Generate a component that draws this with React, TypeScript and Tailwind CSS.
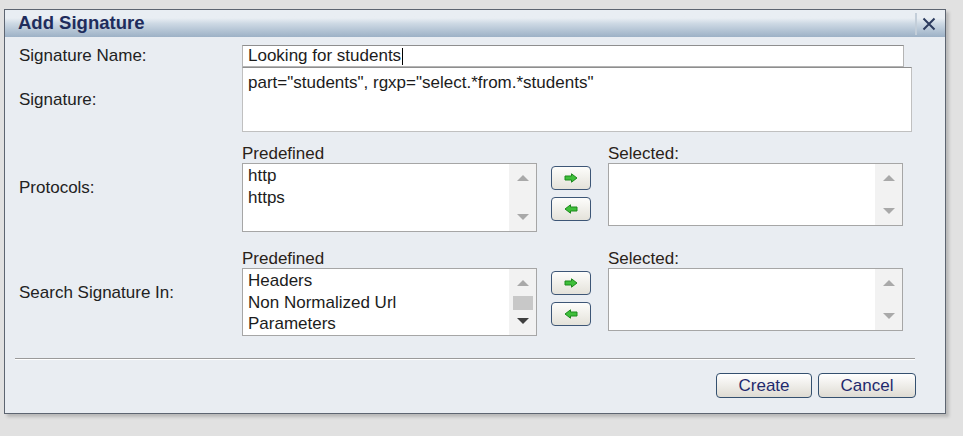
import React from 'react';

const font = { fontFamily: '"Liberation Sans", Arial, sans-serif' };

function Arrow({ dir }: { dir: 'right' | 'left' }) {
  return (
    <svg width="14" height="10" viewBox="0 0 14 10" className={dir === 'left' ? 'rotate-180' : ''}>
      <polygon
        points="1,3 7.5,3 7.5,0.8 13,5 7.5,9.2 7.5,7 1,7"
        fill="#3fbf3a"
        stroke="#1d8a1d"
        strokeWidth="1"
        strokeLinejoin="round"
      />
    </svg>
  );
}

function ListBox({ items, h, thumb }: { items: string[]; h: string; thumb?: boolean }) {
  return (
    <div className={`flex w-[295px] ${h} border border-[#a6a6a6] bg-white`}>
      <div className="flex-1 pl-[5px] pt-[1px] text-[17px] leading-[21.5px] text-[#1c1c1c]">
        {items.map((it) => (
          <div key={it}>{it}</div>
        ))}
      </div>
      <div className="relative flex w-[27px] flex-col items-center justify-between bg-[#f2f2f2] py-[11px]">
        <div className="h-0 w-0 border-x-[6px] border-b-[6px] border-x-transparent border-b-[#a9a9a9]" />
        {thumb && <div className="absolute top-[27px] h-[14px] w-[20px] bg-[#c8c8c8]" />}
        <div
          className={`h-0 w-0 border-x-[6px] border-t-[6px] border-x-transparent ${
            thumb ? 'border-t-[#3f3f3f]' : 'border-t-[#a9a9a9]'
          }`}
        />
      </div>
    </div>
  );
}

function MoveButtons() {
  const btn =
    'flex h-[24px] w-[40px] items-center justify-center rounded-[4px] border border-[#3d5676] bg-gradient-to-b from-[#fdfdfb] to-[#e4e2da]';
  return (
    <div className="mx-[14px] mt-[3px] flex flex-col gap-[7px]">
      <div className={btn}>
        <Arrow dir="right" />
      </div>
      <div className={btn}>
        <Arrow dir="left" />
      </div>
    </div>
  );
}

function PickerRow({
  label,
  left,
  leftH,
  rightH,
  thumb,
}: {
  label: string;
  left: string[];
  leftH: string;
  rightH: string;
  thumb?: boolean;
}) {
  return (
    <div className="flex items-center">
      <div className="w-[227px] pl-[4px] text-[17px] text-[#222]">{label}</div>
      <div className="flex items-start">
        <div>
          <div className="h-[19px] text-[17px] leading-[19px] text-[#2a2218]">Predefined</div>
          <ListBox items={left} h={leftH} thumb={thumb} />
        </div>
        <div className="pt-[19px]">
          <MoveButtons />
        </div>
        <div className="ml-[3px]">
          <div className="h-[19px] text-[17px] leading-[19px] text-[#2a2218]">Selected:</div>
          <ListBox items={[]} h={rightH} />
        </div>
      </div>
    </div>
  );
}

export default function App() {
  return (
    <div className="h-[436px] w-[963px] bg-[#e1e1e1] pl-[4px] pt-[9px]" style={font}>
      <div className="h-[405px] w-[942px] border border-[#5d6571] bg-[#e9edf2] shadow-[3px_3px_3px_rgba(0,0,0,0.18)]">
        {/* title bar */}
        <div className="flex h-[27px] items-center bg-gradient-to-b from-[#e9eef3] from-30% via-[#cdd9e4] to-[#9db1c6] pl-[13px]">
          <div className="flex-1 text-[18.5px] font-bold leading-none text-[#1e2c5c]">Add Signature</div>
          <div className="flex h-[22px] items-center border-l-2 border-[#c3ced9] pl-[5px] pr-[9px]">
            <svg width="14" height="14" viewBox="0 0 14 14">
              <path d="M1.5 1.5 L12.5 12.5 M12.5 1.5 L1.5 12.5" stroke="#2c3b5e" strokeWidth="2" />
            </svg>
          </div>
        </div>

        <div className="px-[10px]">
          {/* name */}
          <div className="mt-[8px] flex h-[22px] items-center">
            <div className="w-[227px] pl-[4px] text-[17px] text-[#222]">Signature Name:</div>
            <div className="flex h-[22px] w-[662px] items-center border border-[#b4b4b4] border-t-[#8e8e8e] bg-white pl-[5px] text-[17px] text-[#1c1c1c]">
              Looking for students
              <span className="ml-[1px] inline-block h-[17px] w-[1px] bg-black" />
            </div>
          </div>

          {/* signature */}
          <div className="flex items-center">
            <div className="w-[227px] pl-[4px] text-[17px] text-[#222]">Signature:</div>
            <div className="h-[65px] w-[670px] border border-[#c0c0c0] border-t-[#8e8e8e] bg-white pl-[5px] pt-[5px] text-[17px] leading-[19px] text-[#1c1c1c]">
              part="students", rgxp="select.*from.*students"
            </div>
          </div>

          <div className="mt-[12px]">
            <PickerRow label="Protocols:" left={['http', 'https']} leftH="h-[69px]" rightH="h-[63px]" />
          </div>

          <div className="mt-[17px]">
            <PickerRow
              label="Search Signature In:"
              left={['Headers', 'Non Normalized Url', 'Parameters']}
              leftH="h-[68px]"
              rightH="h-[63px]"
              thumb
            />
          </div>

          <div className="mt-[22px] h-[2px] w-[900px] border-t border-[#9a9a9a] bg-white" />

          <div className="mt-[13px] flex w-[901px] justify-end gap-[6px]">
            <button className="h-[25px] w-[96px] rounded-[4px] border border-[#34506f] bg-gradient-to-b from-white to-[#dedbd3] text-[17px] leading-none text-[#1f2a6e]">
              Create
            </button>
            <button className="h-[25px] w-[98px] rounded-[4px] border border-[#34506f] bg-gradient-to-b from-white to-[#dedbd3] text-[17px] leading-none text-[#1f2a6e]">
              Cancel
            </button>
          </div>
        </div>
      </div>
    </div>
  );
}
